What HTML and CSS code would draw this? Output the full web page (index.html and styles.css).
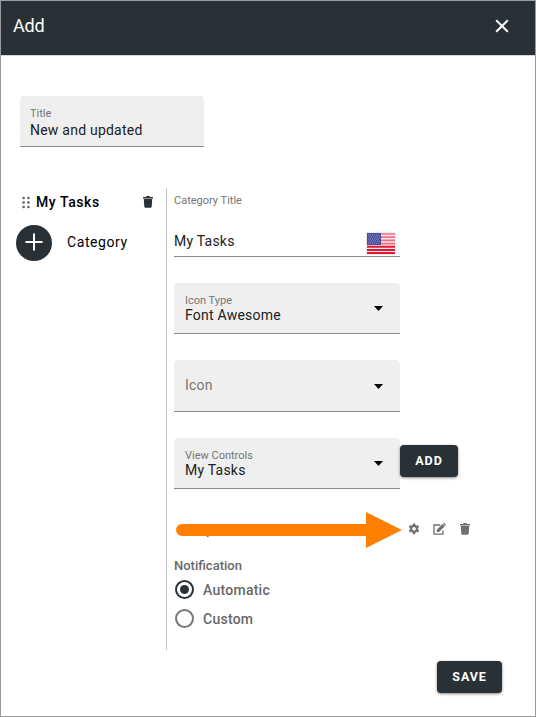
FILE: index.html
```html
<!DOCTYPE html>
<html lang="en">
<head>
<meta charset="utf-8">
<title>Add</title>
<link rel="stylesheet" href="styles.css">
</head>
<body>
<div class="dialog">
  <header class="header">
    <h1>Add</h1>
    <svg class="close" viewBox="0 0 14 14"><path d="M1.2 1.2 12.8 12.8M12.8 1.2 1.2 12.8"/></svg>
  </header>
  <div class="field title-field"><span class="label">Title</span><span class="value">New and updated</span></div>
  <main class="columns">
    <aside class="side">
      <div class="category">
        <svg class="grip" viewBox="0 0 8 13"><circle cx="1.6" cy="2" r="1.35"/><circle cx="6.4" cy="2" r="1.35"/><circle cx="1.6" cy="6.5" r="1.35"/><circle cx="6.4" cy="6.5" r="1.35"/><circle cx="1.6" cy="11" r="1.35"/><circle cx="6.4" cy="11" r="1.35"/></svg>
        <span class="category-name">My Tasks</span>
        <svg class="trash" viewBox="0 0 10 12"><path d="M0 .9h3L3.6 0h2.8L7 .9h3v1.5H0zM.8 3.1h8.4l-.5 7.6q-.1 1.1-1.2 1.1h-5q-1.1 0-1.2-1.1z"/></svg>
      </div>
      <div class="new-category">
        <span class="plus"><svg viewBox="0 0 18 18"><path d="M9 .5v17M.5 9h17"/></svg></span>
        <span class="new-label">Category</span>
      </div>
    </aside>
    <section class="form">
      <div class="label">Category Title</div>
      <div class="text-input">
        <span class="value">My Tasks</span>
        <svg class="flag" viewBox="0 0 28 21">
          <rect width="28" height="21" rx="1" fill="#f8e9ed"/>
          <path stroke="#ee6f82" stroke-width="1.7" d="M0 1h28M0 4.2h28M0 7.4h28M0 10.6h28"/>
          <path stroke="#df1730" stroke-width="2" d="M0 13.8h28M0 17h28M0 20h28"/>
          <rect width="14" height="12" fill="#4a4f9c"/>
          <path stroke="#8f94cb" stroke-width="1" stroke-dasharray="1 1" d="M1 2h12M2 4h11M1 6h12M2 8h11M1 10h12"/>
        </svg>
      </div>
      <div class="field select"><div><span class="label">Icon Type</span><span class="value">Font Awesome</span></div><i class="caret"></i></div>
      <div class="field select empty"><span class="value">Icon</span><i class="caret"></i></div>
      <div class="view-row">
        <div class="field select"><div><span class="label">View Controls</span><span class="value">My Tasks</span></div><i class="caret"></i></div>
        <button class="button add">ADD</button>
      </div>
      <div class="control-row">
        <svg class="grip" viewBox="0 0 8 13"><circle cx="1.6" cy="2" r="1.2"/><circle cx="6.4" cy="2" r="1.2"/><circle cx="1.6" cy="6.5" r="1.2"/><circle cx="6.4" cy="6.5" r="1.2"/><circle cx="1.6" cy="11" r="1.2"/><circle cx="6.4" cy="11" r="1.2"/></svg>
        <span class="control-name">My Tasks</span>
        <svg class="gear" viewBox="0 0 24 24"><path fill-rule="evenodd" d="M9.7 1h4.6l.6 3.2 2 1.1 3-1.1 2.3 4-2.4 2.1v2.4l2.4 2.1-2.3 4-3-1.1-2 1.2-.6 3.6H9.7l-.6-3.6-2-1.2-3 1.1-2.3-4 2.4-2.1v-2.4L1.8 8.2l2.3-4 3 1.1 2-1.1zM12 7.8a3.7 3.7 0 1 0 0 7.4 3.7 3.7 0 0 0 0-7.4z"/></svg>
        <svg class="edit" viewBox="0 0 13 12"><path fill="none" stroke="#6f6f6f" stroke-width="1.3" d="M7.3 2H1v9.2h9V7.5"/><path d="M4 6.5 9.5 1l2.3 2.3-5.5 5.5-2.6.4zM10 .6l.5-.5q.4-.3.8 0l1.4 1.4q.4.4 0 .8l-.5.5z"/></svg>
        <svg class="trash" viewBox="0 0 10 12"><path d="M0 .9h3L3.6 0h2.8L7 .9h3v1.5H0zM.8 3.1h8.4l-.5 7.6q-.1 1.1-1.2 1.1h-5q-1.1 0-1.2-1.1z"/></svg>
        <svg class="arrow" viewBox="0 0 226 36"><path d="M6 12h184V0l36 18-36 18V24H6A6 6 0 0 1 6 12z"/></svg>
      </div>
      <div class="notification">Notification</div>
      <div class="radio checked"><i></i><span>Automatic</span></div>
      <div class="radio"><i></i><span>Custom</span></div>
    </section>
  </main>
  <footer class="footer"><button class="button save">SAVE</button></footer>
</div>
</body>
</html>
```
FILE: styles.css
```css
* { box-sizing: border-box; }
body { margin: 0; font-family: Roboto, sans-serif; color: #212121; background: #fff; }
svg { display: block; flex: none; }
.dialog { width: 536px; height: 717px; border: 1px solid #9b9b9b; overflow: hidden; }
.header { height: 55px; background: #293136; border-bottom: 1px solid #d4d6d7; color: #fff; display: flex; justify-content: space-between; padding: 0 26px 0 12px; }
.header h1 { margin: 14px 0 0; font-size: 18px; line-height: 22px; font-weight: 400; letter-spacing: -.2px; }
.close { width: 14px; height: 14px; margin-top: 18px; fill: none; stroke: #fff; stroke-width: 2; }
.field { height: 51px; background: #efefef; border-bottom: 1px solid #8c8c8c; border-radius: 4px 4px 0 0; padding: 10px 11px 0; }
.title-field { width: 184px; margin: 40px 0 0 19px; padding: 10px 10px 0; }
.label { display: block; font-size: 11px; line-height: 16px; letter-spacing: 0; color: #757575; }
.value { display: block; font-size: 14px; line-height: 16px; letter-spacing: .23px; }
.columns { display: flex; margin-top: 41px; height: 462px; }
.side { width: 166px; border-right: 1px solid #c4c4c4; }
.category { display: flex; align-items: center; height: 28px; padding: 0 13px 0 21px; }
.grip { width: 8px; height: 13px; fill: #666; }
.category-name { margin-left: 6px; flex: 1; font-size: 14px; font-weight: 500; letter-spacing: .58px; color: #000; }
.trash { width: 10px; height: 12px; fill: #293136; }
.new-category { display: flex; align-items: center; height: 36px; margin: 9px 0 0 15px; font-size: 14px; letter-spacing: .58px; color: #000; }
.new-label { margin-bottom: 2px; }
.plus { width: 36px; height: 36px; border-radius: 50%; background: #293136; display: grid; place-items: center; margin-right: 15px; }
.plus svg { width: 18px; height: 18px; stroke: #fff; stroke-width: 2; margin-bottom: 2px; }
.form { flex: 1; padding: 5px 0 0 7px; }
.text-input { width: 226px; height: 27px; margin-top: 21px; border-bottom: 1px solid #8c8c8c; display: flex; justify-content: space-between; padding-right: 5px; }
.text-input .value { margin-top: 3px; }
.flag { width: 28px; height: 21px; margin-top: 3px; filter: drop-shadow(0 0 1px #9999); }
.select { width: 226px; display: flex; justify-content: space-between; margin-top: 26px; padding-right: 17px; }
.select .label + .value { margin-top: -1px; line-height: 14px; }
.caret { width: 9px; height: 5px; margin-top: 13px; background: #000; clip-path: polygon(0 0, 100% 0, 50% 100%); }
.empty { height: 52px; }
.empty .value { margin-top: 7px; color: #757575; }
.empty .caret { margin-top: 14px; }
.view-row { display: flex; }
.button { border: 0; border-radius: 4px; height: 32px; background: #293136; color: #fff; font: 700 12.5px/32px Roboto, sans-serif; letter-spacing: .9px; padding: 0; text-align: center; box-shadow: 0 1px 3px #0007; }
.add { width: 58px; margin-top: 33px; }
.control-row { position: relative; display: flex; align-items: center; height: 36px; margin-top: 23px; width: 296px; color: #6f6f6f; padding-bottom: 2px; }
.control-row .grip { margin-left: 7px; width: 7px; height: 12px; margin-top: 2px; }
.control-name { flex: 1; margin-left: 7px; font-size: 13px; }
.control-row svg { fill: #6f6f6f; }
.gear { width: 12px; height: 12px; margin-right: 13px; }
.edit { width: 13px; height: 12px; margin-right: 14px; }
.control-row .arrow { position: absolute; left: 2px; top: 0; width: 226px; height: 36px; fill: #ff8000; }
.notification { margin-top: 9px; height: 18px; font-size: 13px; line-height: 18px; font-weight: 500; letter-spacing: 0; color: #686868; }
.radio { display: flex; align-items: center; height: 29px; padding-left: 1px; font-size: 14px; font-weight: 500; letter-spacing: .25px; color: #686868; }
.radio span { margin-top: 1px; }
.radio i { width: 19px; height: 19px; border: 2px solid #777; border-radius: 50%; margin-right: 9px; display: grid; place-items: center; }
.radio.checked i { border-color: #293136; }
.checked i::after { content: ""; width: 9px; height: 9px; border-radius: 50%; background: #293136; }
.footer { display: flex; justify-content: flex-end; padding: 11px 33px 0 0; }
.save { width: 65px; }
```
